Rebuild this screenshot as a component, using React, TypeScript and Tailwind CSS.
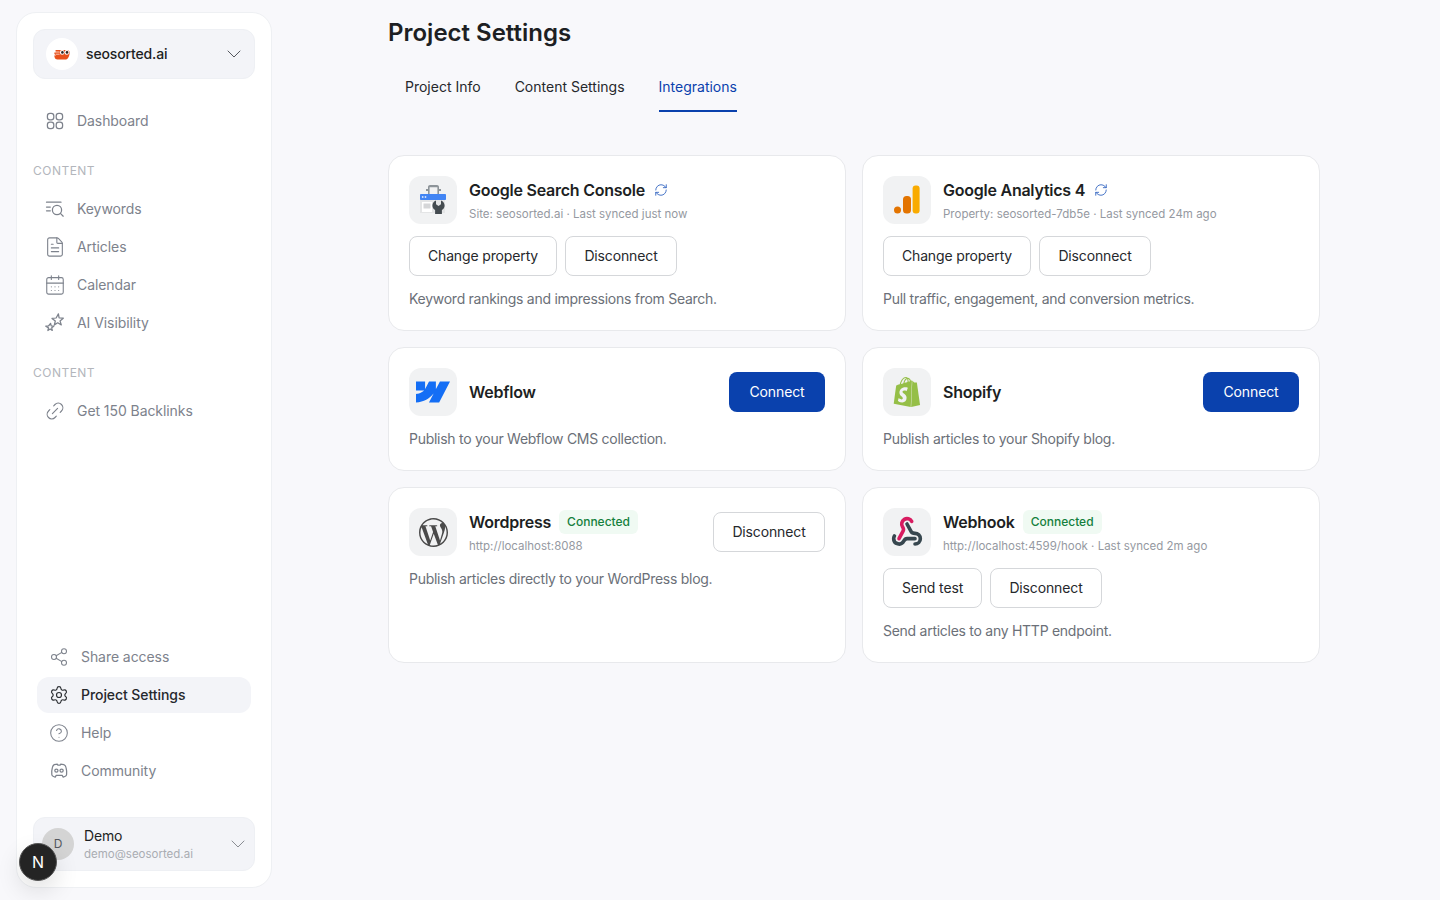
import React from "react";
import {
  ChevronDown,
  FileText,
  CalendarDays,
  Link2,
  Share2,
  Settings,
  CircleHelp,
  RefreshCw,
} from "lucide-react";
import { SiWebflow, SiShopify, SiWordpress } from "react-icons/si";

const DashboardIcon = () => (
  <svg width="20" height="20" viewBox="0 0 20 20" fill="none" stroke="currentColor" strokeWidth="1.25">
    <rect x="2.4" y="2.4" width="6.4" height="6.4" rx="2.6" />
    <rect x="11.2" y="2.4" width="6.4" height="6.4" rx="2.6" />
    <rect x="2.4" y="11.2" width="6.4" height="6.4" rx="2.6" />
    <rect x="11.2" y="11.2" width="6.4" height="6.4" rx="2.6" />
  </svg>
);

const KeywordsIcon = () => (
  <svg width="20" height="20" viewBox="0 0 20 20" fill="none" stroke="currentColor" strokeWidth="1.25" strokeLinecap="round">
    <path d="M1.5 3.2h14.5M1.5 8h3.8M1.5 11.8h3.8" />
    <circle cx="12" cy="11" r="4.6" />
    <path d="M15.4 14.4l2.8 2.8" />
  </svg>
);

const SparkIcon = () => (
  <svg width="20" height="20" viewBox="0 0 20 20" fill="none" stroke="currentColor" strokeWidth="1.25" strokeLinejoin="round">
    <path d="M13.4.9l.7 4 4.2.3-3.3 2.7 1.3 4-3.6-2.1-3.4 2.3 1-4.1L7 5.4l4.1-.4z" />
    <path d="M5.6 10.3l.6 2.5 2.6.4-2.1 1.6.6 2.6-2.2-1.4-2.2 1.5.6-2.6L.8 13.2l2.7-.2z" />
  </svg>
);

const DiscordIcon = () => (
  <svg width="20" height="20" viewBox="0 0 20 20" fill="none" stroke="currentColor" strokeWidth="1.25" strokeLinejoin="round">
    <path d="M5.2 3.6c1.2-.4 2.3-.6 3-.6l.5 1.1h2.6l.5-1.1c.7 0 1.8.2 3 .6 1.1.4 1.9 1.5 2.2 2.8.6 2.2.8 4.8.6 7.1-.1.8-.6 1.5-1.3 1.8l-2.1.9-1-1.8H7.2l-1 1.8-2.1-.9c-.7-.3-1.2-1-1.3-1.8-.2-2.3 0-4.9.6-7.1.3-1.3 1.1-2.4 1.8-2.8z" />
    <circle cx="7.4" cy="9.6" r="1.6" />
    <circle cx="12.6" cy="9.6" r="1.6" />
  </svg>
);

const LogoMark = () => (
  <svg width="16" height="11" viewBox="0 0 16 11">
    <path d="M1.5 1h11.5c1.6 0 2.6 1 2.6 2.6 0 3.2-1.4 6.8-3.6 6.8H3.4c-1.4 0-2.4-.8-2.7-2l-.5-2h1.8L.4 5V3.6h1.4z" fill="#e8501b" />
    <path d="M1.6 3h4M1.6 5.2h4" stroke="#fff" strokeWidth="0.7" />
    <circle cx="8.2" cy="3.4" r="2.3" fill="#fff" />
    <circle cx="12.8" cy="3.4" r="2.3" fill="#fff" />
    <circle cx="8.4" cy="3.4" r="1.3" fill="#2b2320" />
    <circle cx="13" cy="3.4" r="1.3" fill="#2b2320" />
  </svg>
);

const SearchConsoleIcon = () => (
  <svg width="28" height="32" viewBox="0 0 28 32">
    <path d="M9 10V3c0-1.1.9-2 2-2h7c1.1 0 2 .9 2 2v7h-1.6V3.2h-7.800V10z" fill="#8d9499" />
    <path d="M7 5h3v2H7zM19 5h3v2h-3z" fill="#8d9499" />
    <rect x="1" y="10" width="26" height="6" rx="0.8" fill="#4285f4" />
    <circle cx="3.700" cy="13" r="0.9" fill="#d6e4fc" />
    <circle cx="6.500" cy="13" r="0.9" fill="#d6e4fc" />
    <rect x="1" y="16" width="25" height="13" fill="#e4e5e6" />
    <rect x="3" y="18" width="10" height="10" fill="#fff" />
    <rect x="4.500" y="19.500" width="7" height="5" fill="#d5d6d8" />
    <path d="M17 16.500v3.800l2.500 1.700 2.500-1.700v-3.800c2.200.9 3.600 2.800 3.600 5 0 2-1.100 3.600-2.700 4.500v4h-6.800v-4c-1.600-.9-2.700-2.500-2.700-4.500 0-2.200 1.400-4.100 3.600-5z" fill="#444b50" />
  </svg>
);

const AnalyticsIcon = () => (
  <svg width="28" height="30" viewBox="0 0 28 30">
    <circle cx="4.500" cy="25" r="3.500" fill="#e37400" />
    <rect x="10" y="11" width="8" height="17.500" rx="3.500" fill="#e37400" />
    <rect x="19.600" y="0.500" width="7" height="28" rx="3" fill="#f9ab00" />
  </svg>
);

const WebhookIcon = () => (
  <svg width="32" height="32" viewBox="0 0 24 24" fill="none" strokeWidth="2.7" strokeLinecap="round" strokeLinejoin="round">
    <path d="M18 16.980h-5.990c-1.100 0-1.950.94-2.480 1.900A4 4 0 0 1 2 17c.01-.7.2-1.400.57-2" stroke="#37474f" />
    <path d="m12 6 3.130 5.730C15.660 12.700 16.900 13 18 13a4 4 0 0 1 0 8" stroke="#37474f" />
    <path d="m6 17 3.130-5.780c.53-.97.1-2.180-.5-3.100a4 4 0 1 1 6.890-4.060" stroke="#d81b60" />
  </svg>
);

const NavItem = ({ icon, label, active }: { icon: React.ReactNode; label: string; active?: boolean }) => (
  <div
    className={`flex h-9 items-center gap-3 rounded-xl px-3 text-sm tracking-[-0.005em] ${
      active ? "bg-[#f3f4f8] font-medium text-[#26282c]" : "text-[#7d828c]"
    }`}
  >
    <span className={`shrink-0 ${active ? "text-[#2c2f33]" : "text-[#7d828c]"}`}>{icon}</span>
    {label}
  </div>
);

const SectionLabel = () => (
  <div className="mt-6 mb-3 h-4 text-xs leading-4 tracking-[0.04em] text-[#b3b6bc]">CONTENT</div>
);

const Sidebar = () => (
  <aside className="flex h-[876px] w-64 shrink-0 flex-col rounded-[20px] border border-[#eef0f3] bg-white p-4">
    <div className="flex h-[50px] items-center rounded-xl border border-[#eef0f4] bg-[#f3f4f8] pr-2 pl-3">
      <div className="flex h-8 w-8 items-center justify-center rounded-full bg-white">
        <LogoMark />
      </div>
      <span className="ml-2 flex-1 text-sm font-medium tracking-[-0.01em] text-[#1d1f23]">seosorted.ai</span>
      <ChevronDown size={24} strokeWidth={1} className="text-[#55585f]" />
    </div>

    <div className="mt-6">
      <NavItem icon={<DashboardIcon />} label="Dashboard" />
    </div>

    <SectionLabel />
    <div className="flex flex-col gap-0.5">
      <NavItem icon={<KeywordsIcon />} label="Keywords" />
      <NavItem icon={<FileText size={22} strokeWidth={1.2} className="-m-px" />} label="Articles" />
      <NavItem icon={<CalendarDays size={22} strokeWidth={1.2} className="-m-px" />} label="Calendar" />
      <NavItem icon={<SparkIcon />} label="AI Visibility" />
    </div>

    <SectionLabel />
    <NavItem icon={<Link2 size={22} strokeWidth={1.25} className="-m-px -rotate-45" />} label="Get 150 Backlinks" />

    <div className="mt-auto mb-7 flex flex-col gap-0.5 px-1">
      <NavItem icon={<Share2 size={20} strokeWidth={1.25} />} label="Share access" />
      <NavItem icon={<Settings size={20} strokeWidth={1.4} />} label="Project Settings" active />
      <NavItem icon={<CircleHelp size={20} strokeWidth={1.25} />} label="Help" />
      <NavItem icon={<DiscordIcon />} label="Community" />
    </div>

    <div className="flex h-[54px] items-center rounded-xl border border-[#eef0f4] bg-[#f3f4f8] pr-1 pl-2">
      <div className="flex h-8 w-8 items-center justify-center rounded-full bg-[#d4d4d4] text-xs text-[#55585f]">D</div>
      <div className="ml-[10px] flex-1">
        <div className="text-sm leading-[18px] tracking-[-0.01em] text-[#1d1f23]">Demo</div>
        <div className="mt-px text-[11.5px] leading-4 text-[#a9acb2]">demo@seosorted.ai</div>
      </div>
      <ChevronDown size={24} strokeWidth={1} className="text-[#8a8d93]" />
    </div>
  </aside>
);

const IconBox = ({ children }: { children: React.ReactNode }) => (
  <div className="flex h-12 w-12 shrink-0 items-center justify-center rounded-xl bg-[#f1f2f3]">{children}</div>
);

const OutlineButton = ({ children, className }: { children: React.ReactNode; className: string }) => (
  <button className={`h-10 rounded-lg border border-[#d5d7da] bg-white text-sm tracking-[-0.01em] text-[#26282c] ${className}`}>
    {children}
  </button>
);

const ConnectButton = () => (
  <button className="h-10 w-24 rounded-lg bg-[#0a41ad] text-sm tracking-[-0.01em] text-white">Connect</button>
);

const Connected = () => (
  <span className="h-6 rounded-md bg-[#f0faf3] px-2 text-xs leading-6 font-medium text-[#15803d]">Connected</span>
);

const Sync = () => <RefreshCw size={14} strokeWidth={1.5} className="ml-px text-[#2f62c0]" />;

const Heading = ({ title, after, sub }: { title: string; after?: React.ReactNode; sub?: string }) => (
  <div className="ml-3 flex min-h-12 flex-1 flex-col justify-center">
    <div className="flex h-6 items-center gap-2">
      <span className="text-base font-semibold tracking-[-0.015em] text-[#1d1f23]">{title}</span>
      {after}
    </div>
    {sub && <div className="mt-[3px] text-[11.5px] leading-[18px] text-[#9599a1]">{sub}</div>}
  </div>
);

const Desc = ({ children }: { children: React.ReactNode }) => (
  <p className="mt-3 text-sm leading-[22px] tracking-[-0.27px] text-[#6b7078]">{children}</p>
);

const Card = ({ children }: { children: React.ReactNode }) => (
  <div className="rounded-2xl border border-[#e8e9ec] bg-white p-5">{children}</div>
);

const Tab = ({ label, active }: { label: string; active?: boolean }) => (
  <div
    className={`flex h-12 items-center border-b-2 text-sm ${
      active ? "border-[#0a41ad] text-[#0a41ad]" : "border-transparent text-[#26282c]"
    }`}
  >
    {label}
  </div>
);

export default function App() {
  return (
    <div className="relative flex h-screen overflow-hidden bg-[#f8f8fb] py-3 pl-4 font-['Inter',sans-serif]">
      <Sidebar />

      <main className="ml-[116px] w-[932px]">
        <h1 className="mt-[5px] text-2xl font-semibold text-[#1d1f23]">Project Settings</h1>
        <div className="mt-[15px] flex gap-[34px] pl-[17px]">
          <Tab label="Project Info" />
          <Tab label="Content Settings" />
          <Tab label="Integrations" active />
        </div>

        <div className="mt-[43px] grid grid-cols-2 gap-4">
          <Card>
            <div className="flex">
              <IconBox>
                <SearchConsoleIcon />
              </IconBox>
              <Heading title="Google Search Console" after={<Sync />} sub="Site: seosorted.ai · Last synced just now" />
            </div>
            <div className="mt-3 flex gap-2">
              <OutlineButton className="w-[148px]">Change property</OutlineButton>
              <OutlineButton className="w-28">Disconnect</OutlineButton>
            </div>
            <Desc>Keyword rankings and impressions from Search.</Desc>
          </Card>

          <Card>
            <div className="flex">
              <IconBox>
                <AnalyticsIcon />
              </IconBox>
              <Heading
                title="Google Analytics 4"
                after={<Sync />}
                sub="Property: seosorted-7db5e · Last synced 24m ago"
              />
            </div>
            <div className="mt-3 flex gap-2">
              <OutlineButton className="w-[148px]">Change property</OutlineButton>
              <OutlineButton className="w-28">Disconnect</OutlineButton>
            </div>
            <Desc>Pull traffic, engagement, and conversion metrics.</Desc>
          </Card>

          <Card>
            <div className="flex items-center">
              <IconBox>
                <SiWebflow size={34} color="#146ef5" />
              </IconBox>
              <Heading title="Webflow" />
              <ConnectButton />
            </div>
            <Desc>Publish to your Webflow CMS collection.</Desc>
          </Card>

          <Card>
            <div className="flex items-center">
              <IconBox>
                <SiShopify size={30} color="#95bf47" />
              </IconBox>
              <Heading title="Shopify" />
              <ConnectButton />
            </div>
            <Desc>Publish articles to your Shopify blog.</Desc>
          </Card>

          <Card>
            <div className="flex items-center">
              <IconBox>
                <SiWordpress size={29} color="#4a4a4a" />
              </IconBox>
              <Heading title="Wordpress" after={<Connected />} sub="http://localhost:8088" />
              <OutlineButton className="w-28">Disconnect</OutlineButton>
            </div>
            <Desc>Publish articles directly to your WordPress blog.</Desc>
          </Card>

          <Card>
            <div className="flex">
              <IconBox>
                <WebhookIcon />
              </IconBox>
              <Heading
                title="Webhook"
                after={<Connected />}
                sub="http://localhost:4599/hook · Last synced 2m ago"
              />
            </div>
            <div className="mt-3 flex gap-2">
              <OutlineButton className="w-[99px]">Send test</OutlineButton>
              <OutlineButton className="w-28">Disconnect</OutlineButton>
            </div>
            <Desc>Send articles to any HTTP endpoint.</Desc>
          </Card>
        </div>
      </main>

      <div className="absolute top-[843px] left-[19px] flex h-[38px] w-[38px] items-center justify-center rounded-full border border-[#555] bg-[#242424] text-base font-normal text-white shadow-[0_10px_24px_rgba(0,0,0,0.12)]">
        N
      </div>
    </div>
  );
}
